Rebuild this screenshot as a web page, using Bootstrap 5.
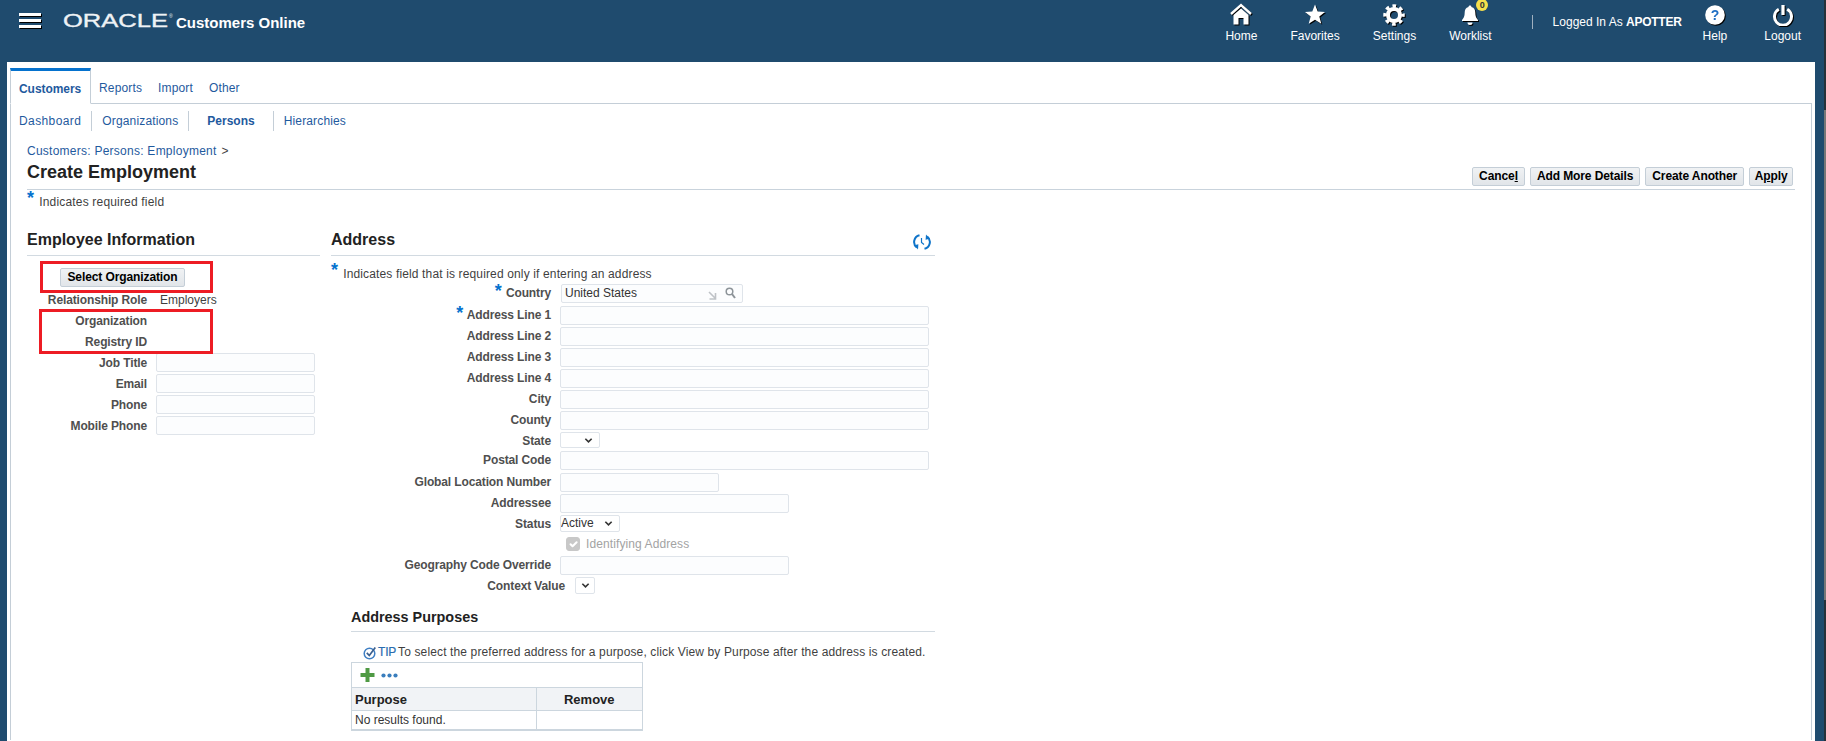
<!DOCTYPE html>
<html lang="en">
<head>
<meta charset="utf-8">
<title>Create Employment</title>
<link rel="stylesheet" href="https://cdn.jsdelivr.net/npm/bootstrap@5.3.0/dist/css/bootstrap.min.css">
<style>
html,body{height:741px;overflow:hidden}
body{background:#1f4b6e;font:12px/19px "Liberation Sans",Arial,sans-serif;color:#3f3f3f}
a{text-decoration:none;color:#1f5a9e}
.page-col{flex:1 1 auto;min-width:0;padding-right:9px}
.scroll-strip{flex:0 0 2px;height:741px;background:linear-gradient(#26313a 0,#26313a 110px,#777 110px,#777 600px,#26313a 600px)}
.top-bar{height:62px;padding-right:14px;color:#fff}
.burger{margin:13px 0 0 19px;width:22px}
.burger span{display:block;height:3px;background:#fff;box-shadow:1px 1px 0 #000;margin-bottom:3px}
.logo-wrap{margin:0 0 0 22px;height:46px;width:113px}
.logo-txt{stroke:#eef2f5;stroke-width:.35px}
.app-name{font-weight:700;font-size:15px;line-height:20px;margin-top:13px}
.top-item{color:#fff;text-align:center;padding-top:3px;line-height:20px;position:relative}
.top-item svg{display:block;margin:0 auto;height:23px;filter:drop-shadow(1px 1px 0 #000)}
.top-item:hover{color:#fff}
.gap-33{gap:33px}
.bell-badge{position:absolute;top:-1px;left:50%;margin-left:6px;width:12px;height:12px;border-radius:50%;background:#f5e04c;color:#333;font-size:9px;font-weight:700;line-height:12px}
.sep-v{width:1px;height:14px;background:#9fb0bf;margin:15px 20px 0 40px}
.logged{margin:12px 21px 0 0;line-height:20px;color:#fff}
.logged b{letter-spacing:-.25px}
.ml-37{margin-left:37px}
.sheet{margin-left:7px;background:#fff;height:679px;padding:6px 3px 0 3px}
.tab-row{height:36px;margin-bottom:-1px;position:relative;z-index:1}
.tab-on{width:81px;height:36px;border:1px solid #c4ced7;border-top:3px solid #0572ce;border-bottom:1px solid #fff;background:#fff;font-weight:700;padding:9px 0 0 8px;line-height:19px;letter-spacing:-.05px}
.tab-off{line-height:19px;padding-top:11px;margin-left:8px;letter-spacing:.15px}
.ml-14{margin-left:16px}
.ml-15{margin-left:16px}
.tab-panel{height:637px;border:1px solid #c4ced7;border-bottom:0;padding-top:7px}
.sub-nav{height:20px;line-height:20px;letter-spacing:.15px}
.sub-nav a{border-right:1px solid #c4ced7;padding:0 10px}
.sub-nav a:first-child{padding-left:8px;letter-spacing:.4px}
.sub-nav a:last-child{border-right:0}
.sub-nav a.sel{font-weight:700;padding:0 18px;letter-spacing:0}
.crumbs{margin:10px 0 0 16px;height:20px;line-height:20px;letter-spacing:.25px}
.crumbs span{margin-left:5px}
.title-row{margin:0 16px;height:29px;border-bottom:1px solid #c9d3dc}
.page-title{font-size:18px;line-height:22px;font-weight:700;color:#222;margin:0}
.act-btn{--bs-btn-padding-x:0;--bs-btn-padding-y:0;font-size:12px;font-weight:700;line-height:17px;height:19px;border:1px solid #c4ced7;border-radius:2px;background:linear-gradient(#f0f2f4,#e1e5e9);color:#000;padding:0 6px;letter-spacing:-.1px;white-space:nowrap}
.act-btn:hover{background:#e1e5e9;color:#000;border-color:#c4ced7}
.act-btn.tight{padding:0 4.5px}
.btn-gap{gap:5px;margin:0 2px 3px 0}
.req-note{margin-left:16px;height:22px;line-height:24px;letter-spacing:.18px}
.req{color:#0572ce;font-weight:700;font-size:18px;line-height:0;vertical-align:0;margin-right:1px}
.req-note .req,.addr-note .req{vertical-align:2px;margin-right:5px}
.columns{margin-left:16px}
.emp-col{width:293px;position:relative}
.addr-col{width:604px;margin-left:11px}
.sec-head{height:44px;padding-top:18px;font-size:16px;line-height:19px;font-weight:700;color:#222;border-bottom:1px solid #d2dae1;margin:0}
.sync{margin:3px 4px 0 0}
.sel-btn{margin:12px 0 3px 33px;padding:0;display:block;width:125px}
.f-row{display:flex;height:21px}
.f-lbl{font-weight:700;color:#4f4f4f;text-align:right;flex:0 0 auto;margin-right:9px;letter-spacing:-.13px}
.emp-col .f-lbl{width:120px;line-height:20px}
.emp-col .f-val{margin-left:4px;line-height:20px}
.addr-col .f-lbl{width:220px}
.fld{--bs-border-radius:2px;height:19px;min-height:0;padding:0 3px;font-size:12px;line-height:17px;background:#fcfdfe;border:1px solid #dfe4ea;border-radius:2px;color:#333}
.w-159{width:159px}
.w-369{width:369px}
.w-159b{width:159px}
.w-228{width:229px}
.h-19r{height:19px}
.h-22r{height:22px}
.h-17r{height:17px}
.note-row{margin-top:8px;height:20px;line-height:20px;letter-spacing:.14px}
.country{width:182px;margin-left:1px;position:relative}
.country svg{position:absolute;top:6px}
.ic-a{left:146px}
.ic-b{left:163px;top:2px!important}
.sel-fld{padding:0 0 0 0;height:17px;line-height:15px;font-size:12px;background-image:url("data:image/svg+xml,%3csvg xmlns='http://www.w3.org/2000/svg' viewBox='0 0 10 7'%3e%3cpath fill='none' stroke='%23333' stroke-width='1.800' d='M1.500 1.500 5 5l3.500-3.500'/%3e%3c/svg%3e");background-position:right 6px center;background-size:9px 7px;border:1px solid #dfe4ea;border-radius:2px;color:#333;background-color:#fff}
.sel-s{width:40px;height:16px}
.sel-st{width:60px}
.sel-c{width:20px;margin-left:1px;background-position:center}
.wide-lbl.f-lbl{width:234px!important}
.chk-row{padding-left:6px;color:#a3a3a3;line-height:14px;align-self:flex-start;letter-spacing:.1px}
.form-check-input.chk-box,.form-check-input.chk-box:checked{width:14px;height:14px;margin:0 6px 0 0;background-color:#c8c8c8;border-color:#c8c8c8;opacity:1;background-size:13px}
.sub-sec{margin-left:20px}
.sub-head{height:38px;padding-top:14px;font-size:14.4px;line-height:18px;font-weight:700;color:#222;border-bottom:1px solid #d2dae1;margin:0}
.tip-row{height:30px;padding:11px 0 0 12px;line-height:18px;white-space:nowrap;letter-spacing:.13px}
.tip-lbl{color:#2a6db0;font-weight:400;margin:0 2px 0 1px;-webkit-text-stroke:.2px #2a6db0;letter-spacing:-.2px}
.pur-box{width:292px;border:1px solid #ccd6de;border-bottom-width:2px}
.pur-tools{height:25px;border-bottom:1px solid #ccd6de;padding-left:8px;gap:6px}
.pur-tbl{margin:0;--bs-table-border-color:#ccd6de;font-size:12px;table-layout:fixed}
.pur-tbl th{background:#f1f3f6;font-size:13px;font-weight:700;color:#222;padding:0 3px;height:22px;line-height:20px;border-bottom:1px solid #ccd6de}
.pur-tbl td{padding:0 3px;height:19px;line-height:18px;color:#333;border:0}
.pur-tbl tr>*+*{border-left:1px solid #ccd6de;width:106px}
.red-box{position:absolute;border:3px solid #ed1c24;pointer-events:none}
.red-a{left:13px;top:49px;width:173px;height:32px}
.red-b{left:12px;top:97px;width:174px;height:45px}
</style>
</head>
<body class="d-flex">
<div class="page-col">
  <header class="top-bar d-flex">
    <div class="burger"><span></span><span></span><span></span></div>
    <div class="logo-wrap">
      <svg width="113" height="40" viewBox="0 0 113 40"><text class="logo-txt" x="0" y="27" font-family="Liberation Sans" font-size="18" fill="#eef2f5" textLength="105" lengthAdjust="spacingAndGlyphs">ORACLE</text><text x="106" y="18" font-family="Liberation Sans" font-size="5" fill="#eef2f5">®</text></svg>
    </div>
    <div class="app-name">Customers Online</div>
    <nav class="ms-auto d-flex">
      <div class="d-flex gap-33">
        <a class="top-item" href="#"><svg width="22" height="23" viewBox="0 0 22 23"><path d="M1 11 11 2.200 21 11" fill="none" stroke="#fff" stroke-width="2.400"/><path d="M3.500 12 11 5.600 18.500 12v9.500h-5v-6.500h-5v6.500h-5z" fill="#fff"/></svg>Home</a>
        <a class="top-item" href="#"><svg width="22" height="23" viewBox="0 0 22 23"><polygon points="11,1.500 13.700,8.600 21,8.900 15.300,13.500 17.300,20.800 11,16.700 4.700,20.800 6.700,13.500 1,8.900 8.300,8.600" fill="#fff"/></svg>Favorites</a>
        <a class="top-item" href="#"><svg width="22" height="23" viewBox="0 0 22 23"><circle cx="11" cy="12" r="6" fill="none" stroke="#fff" stroke-width="4"/><circle cx="11" cy="12" r="9" fill="none" stroke="#fff" stroke-width="3.500" stroke-dasharray="3.600 3.470" stroke-dashoffset="1.800"/></svg>Settings</a>
        <a class="top-item" href="#"><svg width="22" height="23" viewBox="0 0 22 23"><path d="M11 2.500c.9 0 1.500.6 1.500 1.400 2.800.7 3.800 3 3.800 5.600 0 4 1 5.600 2.700 7.500v1H3v-1c1.700-1.900 2.700-3.500 2.700-7.500 0-2.600 1-4.900 3.800-5.600 0-.8.6-1.400 1.500-1.400z" fill="#fff"/><path d="M8.500 19.500h5a2.500 2.500 0 0 1-5 0z" fill="#fff"/></svg>Worklist<span class="bell-badge">0</span></a>
      </div>
      <div class="sep-v"></div>
      <div class="logged">Logged In As <b>APOTTER</b></div>
      <a class="top-item" href="#"><svg width="22" height="23" viewBox="0 0 22 23"><circle cx="11" cy="12" r="9.800" fill="#fff"/><text x="11" y="17" text-anchor="middle" font-family="Liberation Sans" font-weight="700" font-size="14" fill="#1f6fc4">?</text></svg>Help</a>
      <a class="top-item ml-37" href="#"><svg width="22" height="23" viewBox="0 0 22 23"><path d="M6.800 6.300a8.500 8.500 0 1 0 8.400 0" fill="none" stroke="#fff" stroke-width="3"/><path d="M11 2v10" stroke="#fff" stroke-width="3.200"/></svg>Logout</a>
    </nav>
  </header>

  <main class="sheet">
    <div class="tab-row d-flex">
      <a class="tab-on" href="#">Customers</a>
      <a class="tab-off" href="#">Reports</a>
      <a class="tab-off ml-14" href="#">Import</a>
      <a class="tab-off ml-15" href="#">Other</a>
    </div>
    <div class="tab-panel">
      <div class="sub-nav d-flex">
        <a href="#">Dashboard</a><a href="#">Organizations</a><a class="sel" href="#">Persons</a><a href="#">Hierarchies</a>
      </div>
      <div class="crumbs"><a href="#">Customers: Persons: Employment</a><span>&gt;</span></div>
      <div class="title-row d-flex justify-content-between">
        <h1 class="page-title">Create Employment</h1>
        <div class="d-flex btn-gap align-self-end">
          <button class="btn act-btn" type="button">Cance<u>l</u></button>
          <button class="btn act-btn" type="button">Add More Details</button>
          <button class="btn act-btn" type="button">Create Another</button>
          <button class="btn act-btn tight" type="button">A<u>p</u>ply</button>
        </div>
      </div>
      <div class="req-note"><span class="req">*</span>Indicates required field</div>
      <div class="columns d-flex">
        <section class="emp-col">
          <h2 class="sec-head">Employee Information</h2>
          <button class="btn act-btn sel-btn" type="button">Select Organization</button>
          <div class="f-row"><span class="f-lbl">Relationship Role</span><span class="f-val">Employers</span></div>
          <div class="f-row"><span class="f-lbl">Organization</span></div>
          <div class="f-row"><span class="f-lbl">Registry ID</span></div>
          <div class="f-row"><label class="f-lbl">Job Title</label><input class="form-control fld w-159"></div>
          <div class="f-row"><label class="f-lbl">Email</label><input class="form-control fld w-159"></div>
          <div class="f-row"><label class="f-lbl">Phone</label><input class="form-control fld w-159"></div>
          <div class="f-row"><label class="f-lbl">Mobile Phone</label><input class="form-control fld w-159"></div>
          <div class="red-box red-a"></div>
          <div class="red-box red-b"></div>
        </section>
        <section class="addr-col">
          <h2 class="sec-head d-flex justify-content-between">Address
            <svg class="sync" width="18" height="18" viewBox="0 0 18 18" fill="none" stroke="#0f74c9" stroke-width="2"><path d="M6.500 2.200A7 7 0 0 0 3.800 14.500"/><path d="M11.500 15.800A7 7 0 0 0 14.200 3.500"/><path d="M1.200 12.300l3.800 4.300.4-5.300z" fill="#0f74c9" stroke="none"/><path d="M16.800 5.700l-3.800-4.300-.4 5.300z" fill="#0f74c9" stroke="none"/><path d="M8.500 5v4.500l2.500 2" stroke-width="1.200"/></svg>
          </h2>
          <div class="addr-note note-row"><span class="req">*</span>Indicates field that is required only if entering an address</div>
          <div class="f-row h-22r"><label class="f-lbl"><span class="req">*</span> Country</label><div class="fld country">United States
            <svg class="ic-a" width="9" height="9" viewBox="0 0 9 9"><path d="M1 1l6 6M7.500 2v6h-6" stroke="#bfc3c7" stroke-width="1.600" fill="none"/></svg>
            <svg class="ic-b" width="11" height="12" viewBox="0 0 11 12"><circle cx="4.500" cy="4.500" r="3.300" fill="none" stroke="#8d9499" stroke-width="1.500"/><path d="M7 7l3 4" stroke="#8d9499" stroke-width="2"/></svg>
          </div></div>
          <div class="f-row"><label class="f-lbl"><span class="req">*</span> Address Line 1</label><input class="form-control fld w-369"></div>
          <div class="f-row"><label class="f-lbl">Address Line 2</label><input class="form-control fld w-369"></div>
          <div class="f-row"><label class="f-lbl">Address Line 3</label><input class="form-control fld w-369"></div>
          <div class="f-row"><label class="f-lbl">Address Line 4</label><input class="form-control fld w-369"></div>
          <div class="f-row"><label class="f-lbl">City</label><input class="form-control fld w-369"></div>
          <div class="f-row"><label class="f-lbl">County</label><input class="form-control fld w-369"></div>
          <div class="f-row h-19r"><label class="f-lbl">State</label><select class="form-select sel-fld sel-s"><option></option></select></div>
          <div class="f-row h-22r"><label class="f-lbl">Postal Code</label><input class="form-control fld w-369"></div>
          <div class="f-row"><label class="f-lbl">Global Location Number</label><input class="form-control fld w-159b"></div>
          <div class="f-row"><label class="f-lbl">Addressee</label><input class="form-control fld w-228"></div>
          <div class="f-row h-22r"><label class="f-lbl">Status</label><select class="form-select sel-fld sel-st"><option>Active</option></select></div>
          <div class="f-row h-19r"><span class="f-lbl"></span><span class="chk-row d-flex"><input class="form-check-input chk-box" type="checkbox" checked disabled>Identifying Address</span></div>
          <div class="f-row"><label class="f-lbl">Geography Code Override</label><input class="form-control fld w-228"></div>
          <div class="f-row h-17r"><label class="f-lbl wide-lbl">Context Value</label><select class="form-select sel-fld sel-c"><option></option></select></div>
          <div class="sub-sec">
            <h3 class="sub-head">Address Purposes</h3>
            <div class="tip-row">
              <svg width="14" height="14" viewBox="0 0 14 14" fill="none"><circle cx="6.500" cy="7.500" r="5.300" stroke="#3f7fc4" stroke-width="1.500"/><path d="M3.800 6.800l2.500 2.700 6-8" stroke="#3a5f8f" stroke-width="1.700"/></svg><span class="tip-lbl">TIP</span>To select the preferred address for a purpose, click View by Purpose after the address is created.
            </div>
            <div class="pur-box">
              <div class="pur-tools d-flex align-items-center">
                <svg width="15" height="16" viewBox="0 0 15 16"><path d="M5.500 1h4v5h5v4h-5v5h-4v-5h-5V6h5z" fill="#4f9a44"/></svg>
                <svg width="17" height="5" viewBox="0 0 17 5"><circle cx="2.500" cy="2.500" r="2.100" fill="#3a7ebd"/><circle cx="8.500" cy="2.500" r="2.100" fill="#3a7ebd"/><circle cx="14.500" cy="2.500" r="2.100" fill="#3a7ebd"/></svg>
              </div>
              <table class="table pur-tbl">
                <thead><tr><th>Purpose</th><th class="text-center">Remove</th></tr></thead>
                <tbody><tr><td>No results found.</td><td></td></tr></tbody>
              </table>
            </div>
          </div>
        </section>
      </div>
    </div>
  </main>
</div>
<div class="scroll-strip"></div>
</body>
</html>
